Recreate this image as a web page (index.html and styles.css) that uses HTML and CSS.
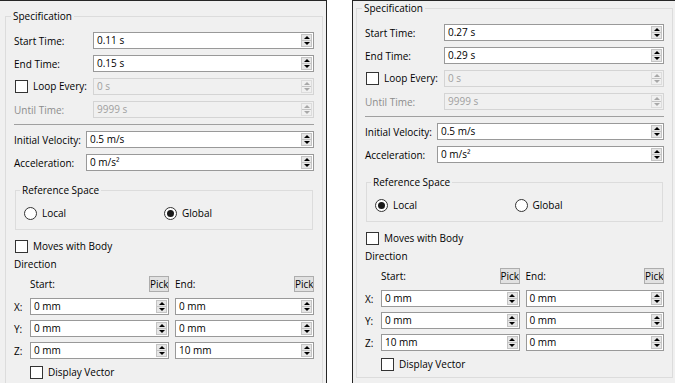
FILE: index.html
```html
<!DOCTYPE html>
<html lang="en">
<head>
    <meta charset="UTF-8">
    <meta name="viewport" content="width=device-width, initial-scale=1.0">
    <title>Motion Specification</title>
    <link rel="stylesheet" href="styles.css">
</head>
<body>
<div class="screen">

    <!-- first dialog: global reference -->
    <div class="panel panel-a">
        <fieldset class="group group-spec">
            <legend>Specification</legend>

            <div class="form-grid times">
                <span class="lbl">Start Time:</span>
                <div class="spin"><span class="spin-value">0.11 s</span><span class="spin-btns"><i class="up"></i><i class="down"></i></span></div>
                <span class="lbl">End Time:</span>
                <div class="spin"><span class="spin-value">0.15 s</span><span class="spin-btns"><i class="up"></i><i class="down"></i></span></div>
                <span class="lbl check"><span class="box"></span>Loop Every:</span>
                <div class="spin disabled"><span class="spin-value">0 s</span><span class="spin-btns"><i class="up"></i><i class="down"></i></span></div>
                <span class="lbl disabled">Until Time:</span>
                <div class="spin disabled"><span class="spin-value">9999 s</span><span class="spin-btns"><i class="up"></i><i class="down"></i></span></div>
            </div>

            <div class="separator"></div>

            <div class="form-grid motion">
                <span class="lbl">Initial Velocity:</span>
                <div class="spin"><span class="spin-value">0.5 m/s</span><span class="spin-btns"><i class="up"></i><i class="down"></i></span></div>
                <span class="lbl">Acceleration:</span>
                <div class="spin"><span class="spin-value">0 m/s²</span><span class="spin-btns"><i class="up"></i><i class="down"></i></span></div>
            </div>

            <fieldset class="group group-ref">
                <legend>Reference Space</legend>
                <div class="radios">
                    <span class="radio"><span class="dot"></span>Local</span>
                    <span class="radio checked"><span class="dot"></span>Global</span>
                </div>
            </fieldset>

            <div class="check moves"><span class="box"></span>Moves with Body</div>
            <div class="section-title">Direction</div>

            <div class="direction">
                <span></span>
                <div class="dir-head"><span>Start:</span><button type="button" class="pick">Pick</button></div>
                <div class="dir-head"><span>End:</span><button type="button" class="pick">Pick</button></div>

                <span class="axis">X:</span>
                <div class="spin"><span class="spin-value">0 mm</span><span class="spin-btns"><i class="up"></i><i class="down"></i></span></div>
                <div class="spin"><span class="spin-value">0 mm</span><span class="spin-btns"><i class="up"></i><i class="down"></i></span></div>

                <span class="axis">Y:</span>
                <div class="spin"><span class="spin-value">0 mm</span><span class="spin-btns"><i class="up"></i><i class="down"></i></span></div>
                <div class="spin"><span class="spin-value">0 mm</span><span class="spin-btns"><i class="up"></i><i class="down"></i></span></div>

                <span class="axis">Z:</span>
                <div class="spin"><span class="spin-value">0 mm</span><span class="spin-btns"><i class="up"></i><i class="down"></i></span></div>
                <div class="spin"><span class="spin-value">10 mm</span><span class="spin-btns"><i class="up"></i><i class="down"></i></span></div>
            </div>

            <div class="check display"><span class="box"></span>Display Vector</div>
        </fieldset>
    </div>

    <!-- second dialog: local reference -->
    <div class="panel panel-b">
        <fieldset class="group group-spec">
            <legend>Specification</legend>

            <div class="form-grid times">
                <span class="lbl">Start Time:</span>
                <div class="spin"><span class="spin-value">0.27 s</span><span class="spin-btns"><i class="up"></i><i class="down"></i></span></div>
                <span class="lbl">End Time:</span>
                <div class="spin"><span class="spin-value">0.29 s</span><span class="spin-btns"><i class="up"></i><i class="down"></i></span></div>
                <span class="lbl check"><span class="box"></span>Loop Every:</span>
                <div class="spin disabled"><span class="spin-value">0 s</span><span class="spin-btns"><i class="up"></i><i class="down"></i></span></div>
                <span class="lbl disabled">Until Time:</span>
                <div class="spin disabled"><span class="spin-value">9999 s</span><span class="spin-btns"><i class="up"></i><i class="down"></i></span></div>
            </div>

            <div class="separator"></div>

            <div class="form-grid motion">
                <span class="lbl">Initial Velocity:</span>
                <div class="spin"><span class="spin-value">0.5 m/s</span><span class="spin-btns"><i class="up"></i><i class="down"></i></span></div>
                <span class="lbl">Acceleration:</span>
                <div class="spin"><span class="spin-value">0 m/s²</span><span class="spin-btns"><i class="up"></i><i class="down"></i></span></div>
            </div>

            <fieldset class="group group-ref">
                <legend>Reference Space</legend>
                <div class="radios">
                    <span class="radio checked"><span class="dot"></span>Local</span>
                    <span class="radio"><span class="dot"></span>Global</span>
                </div>
            </fieldset>

            <div class="check moves"><span class="box"></span>Moves with Body</div>
            <div class="section-title">Direction</div>

            <div class="direction">
                <span></span>
                <div class="dir-head"><span>Start:</span><button type="button" class="pick">Pick</button></div>
                <div class="dir-head"><span>End:</span><button type="button" class="pick">Pick</button></div>

                <span class="axis">X:</span>
                <div class="spin"><span class="spin-value">0 mm</span><span class="spin-btns"><i class="up"></i><i class="down"></i></span></div>
                <div class="spin"><span class="spin-value">0 mm</span><span class="spin-btns"><i class="up"></i><i class="down"></i></span></div>

                <span class="axis">Y:</span>
                <div class="spin"><span class="spin-value">0 mm</span><span class="spin-btns"><i class="up"></i><i class="down"></i></span></div>
                <div class="spin"><span class="spin-value">0 mm</span><span class="spin-btns"><i class="up"></i><i class="down"></i></span></div>

                <span class="axis">Z:</span>
                <div class="spin"><span class="spin-value">10 mm</span><span class="spin-btns"><i class="up"></i><i class="down"></i></span></div>
                <div class="spin"><span class="spin-value">0 mm</span><span class="spin-btns"><i class="up"></i><i class="down"></i></span></div>
            </div>

            <div class="check display"><span class="box"></span>Display Vector</div>
        </fieldset>
    </div>

</div>
</body>
</html>
```

FILE: styles.css
```css
body {
    margin: 0;
    background: #fff;
    font-family: "Open Sans", "Noto Sans", sans-serif;
    font-size: 10px;
    color: #000;
}

.screen {
    display: flex;
    gap: 25px;
    height: 383px;
    overflow: hidden;
}

.panel {
    background: #f0f0f0;
    border-top: 1px solid #262626;
    height: 382px;
    overflow: hidden;
}

.panel-a {
    width: 321px;
    padding-left: 5px;
    border-right: 1px solid #262626;
}

.panel-b {
    flex: 1;
    padding-left: 3px;
    border-left: 1px solid #262626;
}

/* group boxes */
.group {
    margin: 0;
    padding: 8px 8px 6px;
    border: 1px solid #dcdcdc;
    min-width: 0;
}

.group legend {
    padding: 0 2px;
    line-height: 16px;
}

.group-spec {
    margin-top: 7px;
    margin-right: 3px;
}

.group-spec > legend {
    margin-left: -3px;
}

.panel-b .group-spec {
    margin-top: -1px;
    margin-right: 2px;
}

.group-ref {
    margin: 11px 1px 0;
    padding: 9px 8px 9px;
}

.group-ref > legend {
    margin-left: -4px;
}

/* label + field grids */
.form-grid {
    display: grid;
    grid-auto-rows: 17px;
    row-gap: 6px;
    align-items: center;
}

.times {
    grid-template-columns: 79px 1fr;
}

.motion {
    grid-template-columns: 72px 1fr;
}

.lbl {
    white-space: nowrap;
}

.lbl.disabled {
    color: #8c8c8c;
}

.separator {
    height: 1px;
    background: #a0a0a0;
    margin: 6px 0;
}

/* spin boxes */
.spin {
    display: flex;
    height: 17px;
    box-sizing: border-box;
    border: 1px solid #999;
    background: #fff;
}

.spin-value {
    flex: 1;
    padding-left: 3px;
    line-height: 15px;
    white-space: nowrap;
}

.spin-btns {
    width: 9px;
    margin: 1px;
    display: flex;
    flex-direction: column;
    border: 1px solid #c4c4c4;
    background: #e6e6e6;
}

.spin-btns i {
    flex: 1;
    display: flex;
    align-items: center;
    justify-content: center;
}

.spin-btns i::before {
    content: "";
    border-left: 3px solid transparent;
    border-right: 3px solid transparent;
}

.spin-btns .up::before {
    border-bottom: 3px solid #000;
}

.spin-btns .down {
    border-top: 1px solid #c4c4c4;
}

.spin-btns .down::before {
    border-top: 3px solid #000;
}

.spin.disabled {
    background: #f0f0f0;
    border-color: #d4d4d4;
    color: #a0a0a0;
}

.spin.disabled .spin-btns {
    background: #f0f0f0;
    border-color: #dcdcdc;
}

.spin.disabled .up::before {
    border-bottom-color: #a8a8a8;
}

.spin.disabled .down::before {
    border-top-color: #a8a8a8;
}

/* check boxes and radios */
.check {
    display: flex;
    align-items: center;
    gap: 5px;
    line-height: 13px;
    white-space: nowrap;
}

.box {
    width: 13px;
    height: 13px;
    box-sizing: border-box;
    border: 1px solid #333;
    background: #fff;
    margin-left: 1px;
    flex: none;
}

.moves {
    margin-top: 10px;
}

.display {
    margin-top: 7px;
    padding-left: 15px;
}

.radios {
    display: grid;
    grid-template-columns: 1fr 1fr;
}

.radio {
    display: flex;
    align-items: center;
    gap: 5px;
    line-height: 13px;
}

.dot {
    width: 13px;
    height: 13px;
    box-sizing: border-box;
    border: 1px solid #333;
    border-radius: 50%;
    background: #fff;
    display: flex;
    align-items: center;
    justify-content: center;
    flex: none;
}

.radio.checked .dot::before {
    content: "";
    width: 7px;
    height: 7px;
    border-radius: 50%;
    background: #1a1a1a;
}

/* direction block */
.section-title {
    margin-top: 3px;
    line-height: 16px;
}

.direction {
    margin-top: 4px;
    display: grid;
    grid-template-columns: 10px 1fr 1fr;
    grid-auto-rows: 17px;
    column-gap: 6px;
    row-gap: 5px;
    align-items: center;
}

.dir-head {
    display: flex;
    justify-content: space-between;
    align-items: center;
    align-self: start;
    height: 16px;
}

.pick {
    width: 20px;
    height: 16px;
    padding: 0;
    border: 1px solid #adadad;
    background: #e1e1e1;
    font: inherit;
    line-height: 14px;
    color: #000;
    overflow: hidden;
    white-space: nowrap;
    text-align: center;
}
```
